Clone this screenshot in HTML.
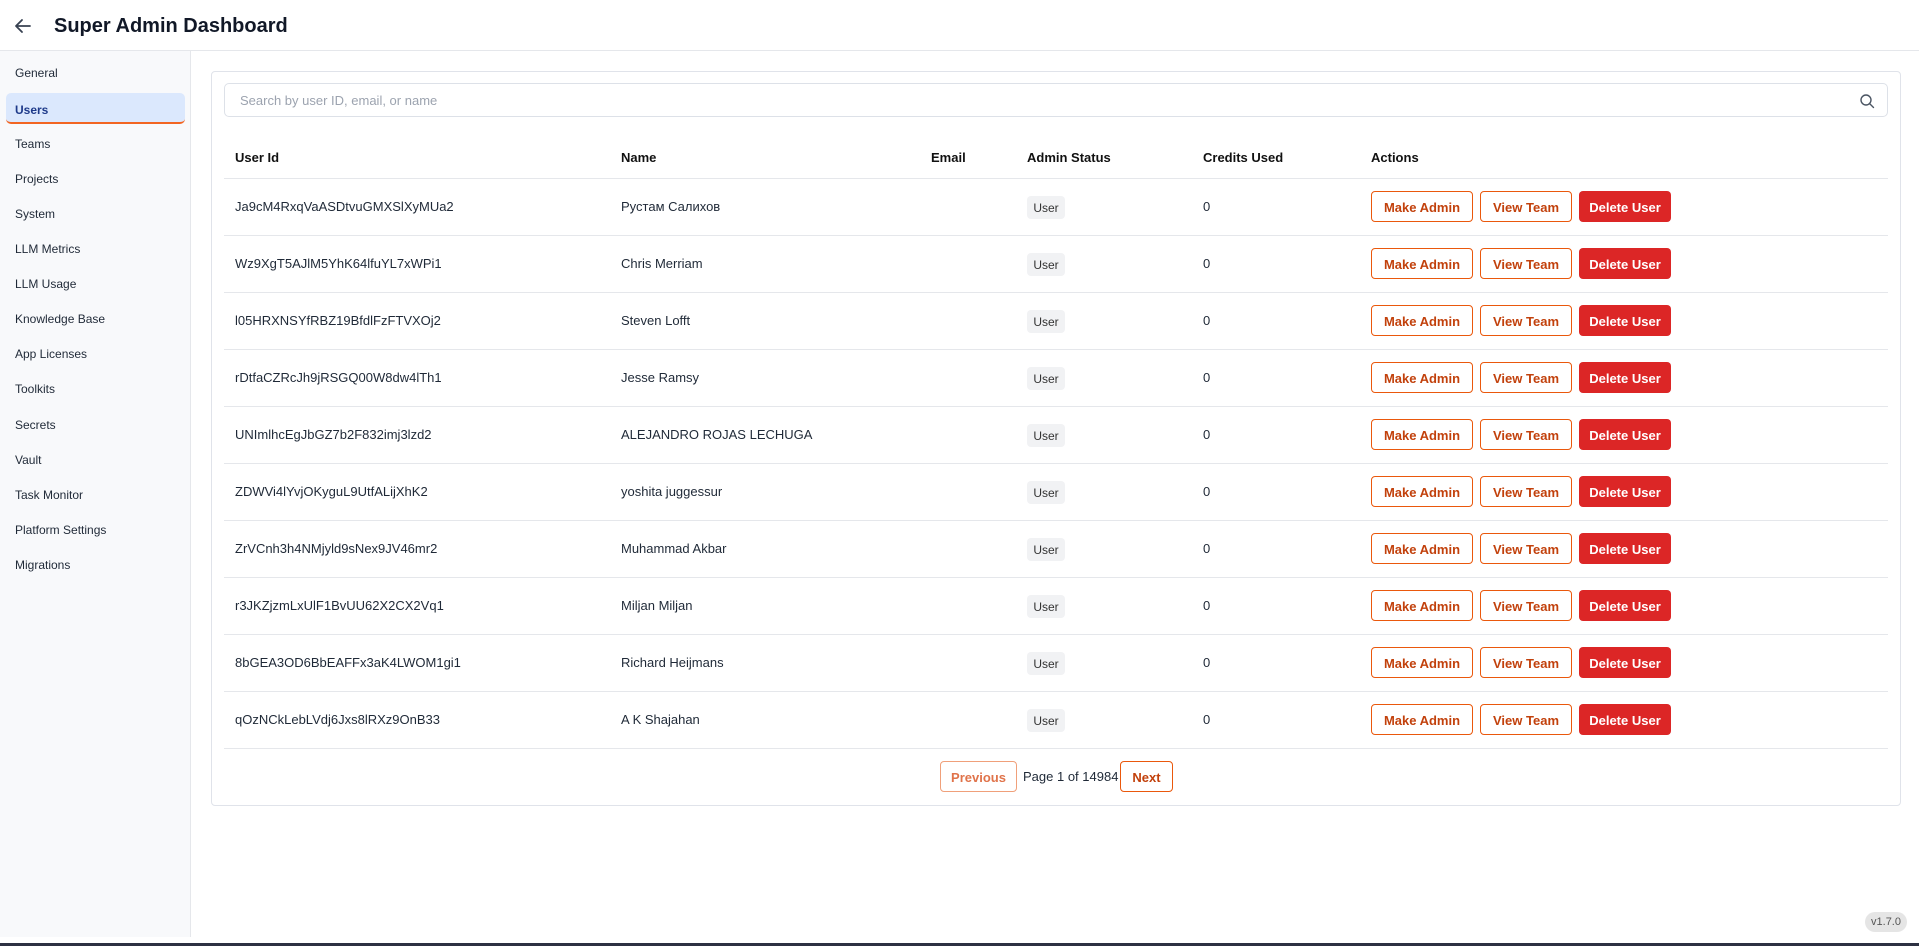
<!DOCTYPE html>
<html><head><meta charset="utf-8"><style>
*{box-sizing:border-box;margin:0;padding:0}
body{width:1919px;height:946px;overflow:hidden;background:#fff;font-family:"Liberation Sans","Noto Sans CJK SC",sans-serif;color:#111827;position:relative}
.hdr{position:absolute;left:0;top:0;width:1919px;height:51px;border-bottom:1px solid #e5e7eb;background:#fff}
.hdr h1{position:absolute;left:54px;top:15px;font-size:20px;font-weight:bold;color:#111827}
.side{position:absolute;left:0;top:51px;width:191px;height:886px;background:#f8f9fb;border-right:1px solid #e5e7eb}
.side div{position:absolute;left:15px;font-size:12px;color:#1f2937}
.side .act{left:6px;width:179px;height:31px;background:#dbe8fd;border-bottom:2px solid #f26522;border-radius:5px;padding:10px 0 0 9px;color:#1e3a8a;font-weight:bold}
.card{position:absolute;left:211px;top:71px;width:1690px;height:735px;border:1px solid #e0e3ea;border-radius:4px;background:#fff}
.search{position:absolute;left:224px;top:83px;width:1664px;height:34px;border:1px solid #dde1e8;border-radius:5px;font-size:13px;color:#9ca3af;padding:9px 0 0 15px}
.th{position:absolute;top:150px;font-size:13px;font-weight:bold;color:#111}
.line{position:absolute;left:224px;width:1664px;height:1px;background:#e5e7eb}
.td{position:absolute;font-size:13px;color:#1f2937}
.badge{position:absolute;left:1027px;width:38px;height:23px;background:#f1f2f4;border-radius:4px;font-size:12px;text-align:center;padding-top:5px;color:#333}
.btn{position:absolute;height:31px;border-radius:4px;font-size:13px;font-weight:bold;text-align:center;padding-top:9px}
.o{border:1px solid #ea580c;color:#c2410c;background:#fff;padding-top:8px}
.r{background:#dc2626;color:#fff}
</style></head><body>
<div class="hdr">
<svg style="position:absolute;left:14px;top:17px" width="18" height="18" viewBox="0 0 18 18"><path d="M16 9H2M8 3L2 9l6 6" fill="none" stroke="#374151" stroke-width="1.8" stroke-linecap="round" stroke-linejoin="round"/></svg>
<h1>Super Admin Dashboard</h1></div>
<div class="side">
<div style="top:15px">General</div>
<div class="act" style="top:42px">Users</div>
<div style="top:86px">Teams</div>
<div style="top:121px">Projects</div>
<div style="top:156px">System</div>
<div style="top:191px">LLM Metrics</div>
<div style="top:226px">LLM Usage</div>
<div style="top:261px">Knowledge Base</div>
<div style="top:296px">App Licenses</div>
<div style="top:331px">Toolkits</div>
<div style="top:367px">Secrets</div>
<div style="top:402px">Vault</div>
<div style="top:437px">Task Monitor</div>
<div style="top:472px">Platform Settings</div>
<div style="top:507px">Migrations</div>
</div>
<div class="card"></div>
<div class="search">Search by user ID, email, or name
<svg style="position:absolute;right:12px;top:9px" width="16" height="16" viewBox="0 0 16 16"><circle cx="7" cy="7" r="5" fill="none" stroke="#4b5563" stroke-width="1.4"/><path d="M11 11l3.5 3.5" stroke="#4b5563" stroke-width="1.4" stroke-linecap="round"/></svg></div>
<div class="th" style="left:235px">User Id</div>
<div class="th" style="left:621px">Name</div>
<div class="th" style="left:931px">Email</div>
<div class="th" style="left:1027px">Admin Status</div>
<div class="th" style="left:1203px">Credits Used</div>
<div class="th" style="left:1371px">Actions</div>
<div class="line" style="top:178px"></div>
<div id="rows"></div>
<script>
var d=[["Ja9cM4RxqVaASDtvuGMXSlXyMUa2","Рустам Салихов"],["Wz9XgT5AJlM5YhK64lfuYL7xWPi1","Chris Merriam"],["l05HRXNSYfRBZ19BfdlFzFTVXOj2","Steven Lofft"],["rDtfaCZRcJh9jRSGQ00W8dw4lTh1","Jesse Ramsy"],["UNImlhcEgJbGZ7b2F832imj3lzd2","ALEJANDRO ROJAS LECHUGA"],["ZDWVi4lYvjOKyguL9UtfALijXhK2","yoshita juggessur"],["ZrVCnh3h4NMjyld9sNex9JV46mr2","Muhammad Akbar"],["r3JKZjzmLxUlF1BvUU62X2CX2Vq1","Miljan Miljan"],["8bGEA3OD6BbEAFFx3aK4LWOM1gi1","Richard Heijmans"],["qOzNCkLebLVdj6Jxs8lRXz9OnB33","A K Shajahan"]];
var h="";d.forEach(function(r,i){var y=178+57*i,c=y+29;
h+='<div class="td" style="left:235px;top:'+(c-8)+'px">'+r[0]+'</div><div class="td" style="left:621px;top:'+(c-8)+'px">'+r[1]+'</div><div class="badge" style="top:'+(c-11)+'px">User</div><div class="td" style="left:1203px;top:'+(c-8)+'px">0</div>'+
'<div class="btn o" style="left:1371px;width:102px;top:'+(c-16)+'px">Make Admin</div><div class="btn o" style="left:1480px;width:92px;top:'+(c-16)+'px">View Team</div><div class="btn r" style="left:1579px;width:92px;top:'+(c-16)+'px">Delete User</div><div class="line" style="top:'+(y+57)+'px"></div>';});
document.getElementById("rows").innerHTML=h;
</script>
<div class="btn o" style="left:940px;width:77px;top:761px;color:#e0734a;border-color:#f0a07a">Previous</div>
<div class="td" style="left:1023px;top:769px">Page 1 of 14984</div>
<div class="btn o" style="left:1120px;width:53px;top:761px">Next</div>
<div style="position:absolute;left:1865px;top:912px;width:42px;height:20px;border-radius:10px;background:#e5e5e5;font-size:11px;color:#555;text-align:center;padding-top:4px">v1.7.0</div>
<div style="position:absolute;left:0;top:943px;width:1919px;height:3px;background:#2d3142"></div>
</body></html>
